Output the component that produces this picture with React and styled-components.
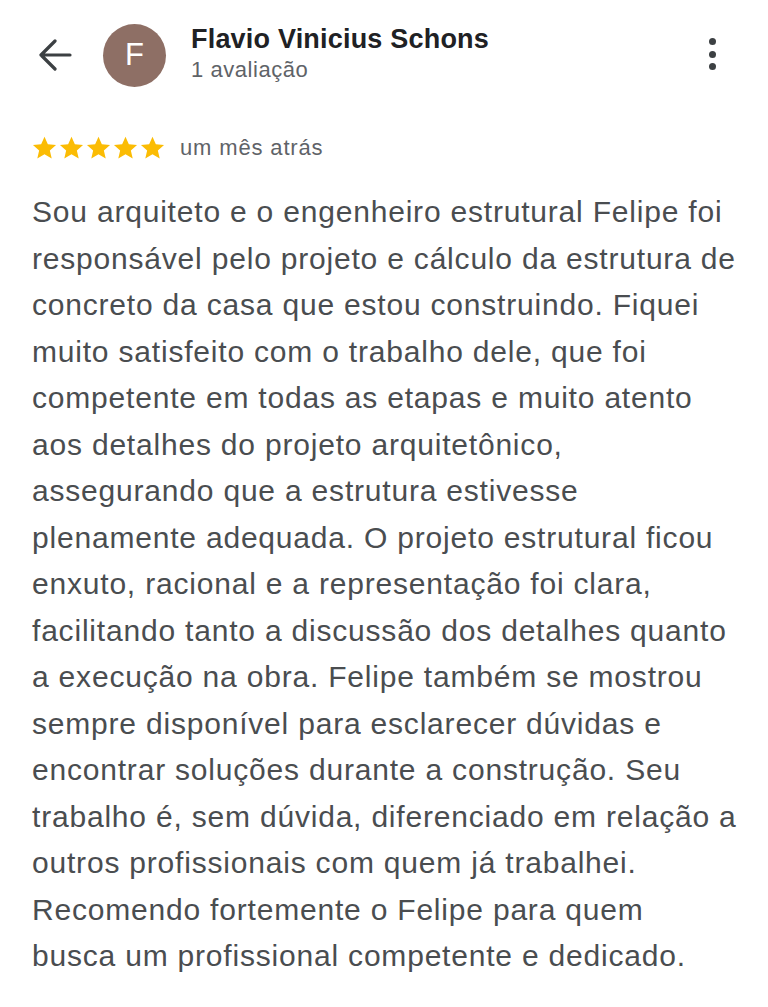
import React from 'react';
import styled, { createGlobalStyle } from 'styled-components';

const GlobalStyle = createGlobalStyle`
  html, body {
    margin: 0;
    padding: 0;
    background: #ffffff;
  }
  body {
    font-family: "Liberation Sans", Arial, sans-serif;
    -webkit-font-smoothing: antialiased;
  }
`;

const lines = [
  'Sou arquiteto e o engenheiro estrutural Felipe foi',
  'responsável pelo projeto e cálculo da estrutura de',
  'concreto da casa que estou construindo. Fiquei',
  'muito satisfeito com o trabalho dele, que foi',
  'competente em todas as etapas e muito atento',
  'aos detalhes do projeto arquitetônico,',
  'assegurando que a estrutura estivesse',
  'plenamente adequada. O projeto estrutural ficou',
  'enxuto, racional e a representação foi clara,',
  'facilitando tanto a discussão dos detalhes quanto',
  'a execução na obra. Felipe também se mostrou',
  'sempre disponível para esclarecer dúvidas e',
  'encontrar soluções durante a construção. Seu',
  'trabalho é, sem dúvida, diferenciado em relação a',
  'outros profissionais com quem já trabalhei.',
  'Recomendo fortemente o Felipe para quem',
  'busca um profissional competente e dedicado.',
];

function Star() {
  return (
    <svg width="27" height="26" viewBox="0 0 24 24">
      <path fill="#fbbc04" d="M12 1.6l3.1 6.95 7.55.72-5.7 5.02 1.7 7.41L12 17.8l-6.65 3.9 1.7-7.41-5.7-5.02 7.55-.72z" />
    </svg>
  );
}

export default function App() {
  return (
    <>
      <GlobalStyle />
      <Page>
        <Header>
          <BackButton aria-label="Voltar">
            <svg width="34" height="32" viewBox="0 0 34 32">
              <path
                d="M32 16H3M17 2L3 16l14 14"
                fill="none"
                stroke="#3c4043"
                strokeWidth="3.2"
                strokeLinecap="round"
                strokeLinejoin="round"
              />
            </svg>
          </BackButton>
          <Avatar>F</Avatar>
          <Author>
            <Name>Flavio Vinicius Schons</Name>
            <Meta>1 avaliação</Meta>
          </Author>
          <MenuButton aria-label="Mais opções">
            <Dot />
            <Dot />
            <Dot />
          </MenuButton>
        </Header>
        <RatingRow>
          <Stars>
            {[0, 1, 2, 3, 4].map((i) => (
              <Star key={i} />
            ))}
          </Stars>
          <When>um mês atrás</When>
        </RatingRow>
        <Review>
          {lines.map((l, i) => (
            <Line key={i}>{l}</Line>
          ))}
        </Review>
      </Page>
    </>
  );
}

const Page = styled.div`
  padding: 0 32px;
  color: #3c4043;
`;

const Header = styled.header`
  display: flex;
  align-items: center;
  height: 110px;
`;

const BackButton = styled.button`
  border: 0;
  background: none;
  padding: 0;
  margin-left: 6px;
  margin-right: 31px;
  display: flex;
  align-items: center;
  justify-content: center;
  cursor: pointer;
`;

const Avatar = styled.div`
  width: 63px;
  height: 63px;
  border-radius: 50%;
  background: #8e6f65;
  color: #fff;
  font-size: 31px;
  display: flex;
  align-items: center;
  justify-content: center;
  flex-shrink: 0;
`;

const Author = styled.div`
  display: flex;
  flex-direction: column;
  margin-left: 25px;
  flex: 1;
  margin-top: -3px;
`;

const Name = styled.div`
  font-size: 27px;
  font-weight: 700;
  color: #202124;
  line-height: 32px;
  letter-spacing: 0.2px;
`;

const Meta = styled.div`
  font-size: 22px;
  color: #5f6368;
  line-height: 30px;
  letter-spacing: 0.55px;
`;

const MenuButton = styled.button`
  border: 0;
  background: none;
  padding: 0;
  width: 12px;
  display: flex;
  flex-direction: column;
  align-items: center;
  gap: 5.5px;
  margin-right: 18px;
  margin-top: -2px;
  cursor: pointer;
`;

const Dot = styled.span`
  width: 7px;
  height: 7px;
  border-radius: 50%;
  background: #3c4043;
`;

const RatingRow = styled.div`
  display: flex;
  align-items: center;
  gap: 14px;
  height: 34px;
  margin-top: 21px;
`;

const Stars = styled.div`
  display: flex;
  margin-left: -1px;
`;

const When = styled.span`
  font-size: 22px;
  color: #5f6368;
  letter-spacing: 0.85px;
`;

const Review = styled.div`
  margin-top: 24px;
  font-size: 30px;
  line-height: 46.5px;
  letter-spacing: 0.8px;
  color: #4a4d50;
`;

const Line = styled.div`
  white-space: nowrap;
`;
